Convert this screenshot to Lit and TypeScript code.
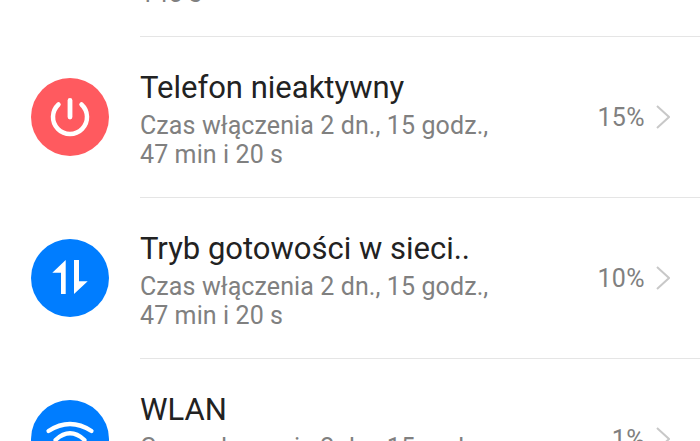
import { LitElement, html, css, svg } from 'lit';
import { customElement } from 'lit/decorators.js';

type Row = {
  icon: 'power' | 'data' | 'wifi';
  color: string;
  title: string;
  lines: string[];
  percent: string;
};

const rows: Row[] = [
  {
    icon: 'power',
    color: '#ff5a5f',
    title: 'Telefon nieaktywny',
    lines: ['Czas włączenia 2 dn., 15 godz.,', '47 min i 20 s'],
    percent: '15%',
  },
  {
    icon: 'data',
    color: '#007dff',
    title: 'Tryb gotowości w sieci..',
    lines: ['Czas włączenia 2 dn., 15 godz.,', '47 min i 20 s'],
    percent: '10%',
  },
  {
    icon: 'wifi',
    color: '#007dff',
    title: 'WLAN',
    lines: ['Czas włączenia 2 dn., 15 godz.,', '47 min i 20 s'],
    percent: '1%',
  },
];

const icons = {
  power: svg`
    <path d="M27.500 26.500a17 17 0 1 0 23 0" fill="none" stroke="#fff" stroke-width="4.500" stroke-linecap="round"/>
    <path d="M39 22.500v16.500" fill="none" stroke="#fff" stroke-width="4.800" stroke-linecap="round"/>`,
  data: svg`
    <path d="M21.300 33.700 34.700 21v34H30V33.700z" fill="#fff"/>
    <path d="M43 21h5v21.300h8.700L43 55z" fill="#fff"/>`,
  wifi: svg`
    <path d="M17.500 31Q39 17 60.500 31" fill="none" stroke="#fff" stroke-width="4.200" stroke-linecap="round"/>
    <path d="M24.500 40Q39 26.500 53.500 40" fill="none" stroke="#fff" stroke-width="4.200" stroke-linecap="round"/>
    <path d="M31.500 49Q39 42 46.500 49" fill="none" stroke="#fff" stroke-width="4.200" stroke-linecap="round"/>`,
};

@customElement('app-root')
export class AppRoot extends LitElement {
  static styles = css`
    :host {
      display: block;
      height: 441px;
      overflow: hidden;
      background: #fff;
      font-family: Roboto, "Noto Sans", sans-serif;
    }

    .peek {
      height: 36px;
      padding-left: 140px;
      overflow: hidden;
    }

    .peek .sub {
      margin-top: -21px;
    }

    .row {
      display: flex;
      align-items: center;
      height: 161px;
    }

    .icon-col {
      width: 140px;
      flex: none;
      display: flex;
      justify-content: center;
    }

    .icon {
      width: 78px;
      height: 78px;
      margin-top: 1px;
      display: block;
    }

    .content {
      flex: 1;
      height: 100%;
      display: flex;
      align-items: center;
      border-top: 1px solid #e5e5e5;
      padding-right: 30px;
      box-sizing: border-box;
    }

    .text {
      flex: 1;
      padding-top: 2px;
    }

    .title {
      font-size: 31px;
      line-height: 40px;
      margin-bottom: 3px;
      color: #222;
    }

    .sub {
      font-size: 25px;
      line-height: 29px;
      letter-spacing: 0.1px;
      color: #808080;
    }

    .percent {
      font-size: 25px;
      letter-spacing: 0.4px;
      color: #808080;
      margin-right: 11px;
    }

    .chevron {
      display: block;
    }
  `;

  render() {
    return html`
      <div class="peek"><div class="sub">145 s</div></div>
      ${rows.map(
        (r) => html`
          <div class="row">
            <div class="icon-col">
              <svg class="icon" viewBox="0 0 78 78">
                <circle cx="39" cy="39" r="39" fill=${r.color}></circle>
                ${icons[r.icon]}
              </svg>
            </div>
            <div class="content">
              <div class="text">
                <div class="title">${r.title}</div>
                ${r.lines.map((l) => html`<div class="sub">${l}</div>`)}
              </div>
              <span class="percent">${r.percent}</span>
              <svg class="chevron" width="14" height="24" viewBox="0 0 14 24">
                <path d="M1 1l12 11L1 23" fill="none" stroke="#c8c8c8" stroke-width="2"></path>
              </svg>
            </div>
          </div>
        `
      )}
    `;
  }
}
